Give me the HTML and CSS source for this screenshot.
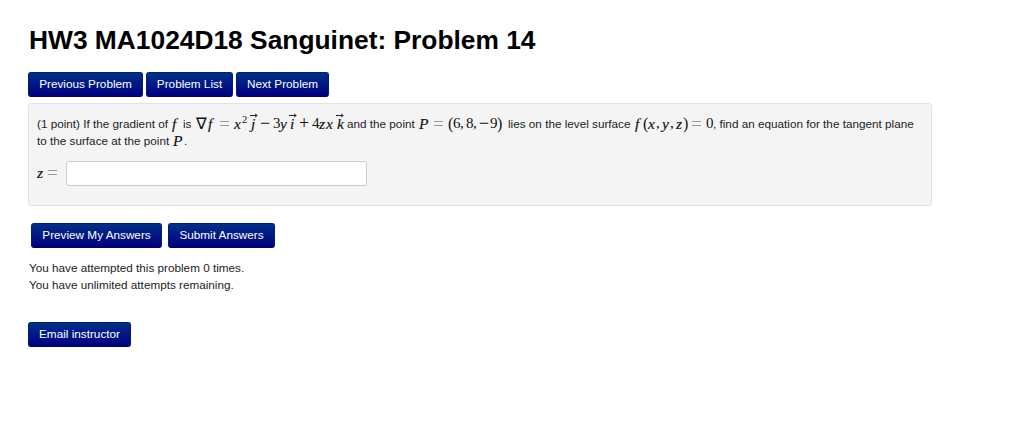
FILE: index.html
```html
<!DOCTYPE html>
<html lang="en">
<head>
    <meta charset="UTF-8">
    <meta name="viewport" content="width=device-width, initial-scale=1.0">
    <title>HW3 MA1024D18 Sanguinet: Problem 14</title>
    <link rel="stylesheet" href="styles.css">
</head>
<body>
    <h1>HW3 MA1024D18 Sanguinet: Problem 14</h1>

    <!-- Problem navigation -->
    <nav class="problem-nav">
        <button class="btn prev">Previous Problem</button>
        <button class="btn list">Problem List</button>
        <button class="btn next">Next Problem</button>
    </nav>

    <!-- Problem statement -->
    <section class="problem">
        <div class="line"><span class="t1">(1 point) If the gradient of</span><span class="math m1"><i>f</i></span><span class="t2">is</span><span class="math m2"><b class="nabla">∇</b><i>f</i><b class="eq">=</b><i>x</i><sup>2</sup><i class="vec">j</i><b class="op">−</b><b>3</b><i>y</i><i class="vec">i</i><b class="op">+</b><b>4</b><i class="z">z</i><i>x</i><i class="vec">k</i></span><span class="t3">and the point</span><span class="math m3"><i class="big">P</i><b class="eq">=</b><b class="paren">(</b><b>6</b><b class="comma">,</b><b>8</b><b class="comma">,</b><b class="minus">−</b><b>9</b><b class="paren">)</b></span><span class="t4">lies on the level surface</span><span class="math m4"><i>f</i><b class="paren">(</b><i>x</i><b class="comma">,</b><i>y</i><b class="comma">,</b><i class="z">z</i><b class="paren">)</b><b class="eq">=</b><b>0</b></span><span class="t5">, find an equation for the tangent plane</span></div>
        <div class="line"><span class="t6">to the surface at the point</span><span class="math m6"><i class="big">P</i></span><span>.</span></div>
        <div class="answer">
            <span class="math"><i class="z">z</i><b class="eq">=</b></span>
            <input type="text" aria-label="answer">
        </div>
    </section>

    <div class="submit-buttons">
        <button class="btn preview">Preview My Answers</button>
        <button class="btn submit">Submit Answers</button>
    </div>

    <!-- Attempts -->
    <p class="attempts">You have attempted this problem 0 times.<br>You have unlimited attempts remaining.</p>

    <button class="btn email">Email instructor</button>
</body>
</html>
```
FILE: styles.css
```css
body {
    margin: 0;
    padding: 24px 92px 0 28px;
    font-family: "Liberation Sans", Arial, sans-serif;
    font-size: 11.73px;
    line-height: 17px;
    color: #1c1c1c;
    background-color: #fff;
}
h1 {
    margin: 0 0 16px 1px;
    font-size: 26.35px;
    line-height: 32px;
    color: #000;
}
.problem-nav {
    display: flex;
    gap: 3px;
}
.btn {
    display: block;
    box-sizing: border-box;
    height: 25px;
    padding: 0 0 2px;
    border: 1px solid #001f70;
    border-bottom-color: #000066;
    border-radius: 3px;
    font-family: inherit;
    font-size: 11.75px;
    line-height: 21px;
    text-align: center;
    white-space: nowrap;
    color: #fff;
    background-image: linear-gradient(#003088, #000080);
}
.prev {
    width: 115px;
}
.list {
    width: 87px;
}
.next {
    width: 93px;
}
.problem {
    box-sizing: border-box;
    height: 103px;
    margin-top: 6px;
    padding: 11px 0 0 8px;
    border: 1px solid #e2e2e2;
    border-radius: 3px;
    background-color: #f4f4f4;
}
.line {
    display: flex;
    height: 17px;
    white-space: nowrap;
}
.t1 {
    width: 135px;
}
.t2 {
    width: 13px;
}
.t3 {
    width: 72px;
}
.t4 {
    width: 127px;
}
.t6 {
    width: 136px;
}
/* Math */
.math {
    display: flex;
    height: 17px;
    font-family: "Liberation Serif", "Times New Roman", serif;
    font-size: 15px;
    line-height: 17px;
    color: #111;
}
.math b {
    width: 7px;
    font-weight: normal;
}
.math i {
    width: 8px;
    font-size: 15.5px;
    -webkit-text-stroke: 0.15px #111;
}
.math .z {
    width: 7px;
}
.math .big {
    width: 11px;
}
.math .eq {
    width: 11px;
    margin: 0 4px 0 3px;
    font-size: 19px;
    color: #999;
}
.math .op {
    width: 10px;
    margin: 0 3px;
    font-size: 18px;
}
.math .minus {
    width: 11px;
    font-size: 18px;
}
.math .comma {
    width: 6px;
}
.math .paren {
    width: 5px;
    font-size: 16px;
}
.math sup {
    width: 6px;
    font-size: 10.5px;
    line-height: 10px;
}
.math .nabla {
    width: 12px;
    font-size: 15.5px;
}
.math .vec {
    position: relative;
    width: 6px;
    margin-left: 3px;
}
.math i + .vec {
    margin-left: 2px;
}
.math .z + i + .vec {
    margin-left: 3px;
}
/* Arrow over the vector */
.vec::before {
    content: "";
    position: absolute;
    left: -1px;
    top: 0;
    width: 7px;
    height: 1px;
    background-color: #222;
}
.vec::after {
    content: "";
    position: absolute;
    left: 3px;
    top: -1px;
    width: 2px;
    height: 2px;
    border-top: 1px solid #333;
    border-right: 1px solid #333;
    transform: rotate(45deg);
}
.m1 {
    width: 11px;
}
.m2 {
    width: 151px;
}
.m3 {
    width: 89px;
}
.m4 {
    width: 78px;
}
.m6 {
    width: 11px;
}
.answer {
    display: flex;
    align-items: center;
    margin-top: 12px;
}
.answer .math {
    width: 29px;
    margin-top: -3px;
}
.answer input {
    box-sizing: border-box;
    width: 301px;
    height: 25px;
    margin: 0;
    padding: 3px 5px;
    border: 1px solid #ccc;
    border-radius: 3px;
    background-color: #fff;
}
.submit-buttons {
    display: flex;
    gap: 6px;
    margin: 17px 0 0 3px;
}
.preview {
    width: 131px;
}
.submit {
    width: 107px;
}
.attempts {
    margin: 11px 0 29px 1px;
}
.email {
    width: 103px;
}
```
